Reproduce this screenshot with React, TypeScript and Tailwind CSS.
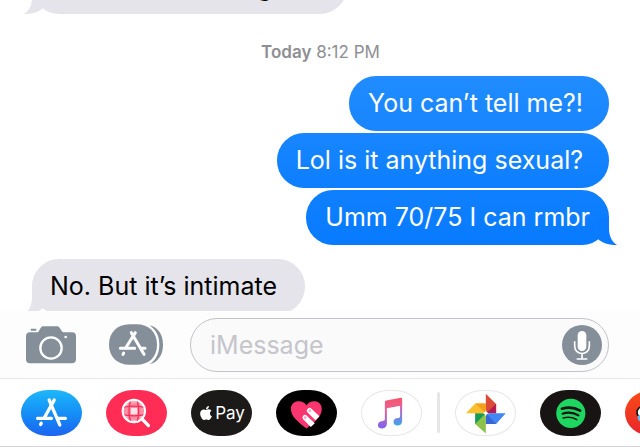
import type { ReactNode } from "react";
import { FaApple } from "react-icons/fa";

const fontStack = "font-['Inter','Liberation_Sans',sans-serif]";

function SentTail() {
  return (
    <svg className="absolute bottom-0 -right-2 h-7 w-[26px]" viewBox="0 0 26 28" aria-hidden="true">
      <path d="M10 0H18V12C18 19 21 25 26 28C18 28 12 26 8 23L4 18Z" fill="#0a7bff" />
    </svg>
  );
}

function ReceivedTail() {
  return (
    <svg className="absolute bottom-0 -left-2 h-7 w-[26px]" viewBox="0 0 26 28" aria-hidden="true">
      <path d="M16 0H8V12C8 19 5 25 0 28C8 28 14 26 18 23L22 18Z" fill="#e5e4ea" />
    </svg>
  );
}

function Bubble({ className, tail, children }: { className: string; tail?: ReactNode; children: ReactNode }) {
  return (
    <div className={`relative flex h-[55px] items-center rounded-[27px] text-[25px] whitespace-nowrap ${className}`}>
      {tail}
      <p className="relative">{children}</p>
    </div>
  );
}

function AppStoreMark() {
  return (
    <g fill="none" stroke="#fff" strokeLinecap="round" strokeLinejoin="round">
      <path d="M117 58L149 133" strokeWidth="10" />
      <path d="M132 58L102 112" strokeWidth="10" />
      <path d="M82 113H124M144 113H166" strokeWidth="10" />
      <path d="M93 128L91 132" strokeWidth="10" />
    </g>
  );
}

function AppPill({ label, className, children }: { label: string; className: string; children: ReactNode }) {
  return (
    <button
      type="button"
      aria-label={label}
      className={`flex h-[46px] w-[61px] shrink-0 items-center justify-center overflow-hidden rounded-[27px/23px] ${className}`}
    >
      {children}
    </button>
  );
}

function CameraIcon() {
  return (
    <svg className="h-[39px] w-[50px]" viewBox="0 0 150 117" aria-hidden="true">
      <path
        d="M12 22H34C41 22 42 4 51 4H94C103 4 105 22 113 22H138Q150 22 150 34V103Q150 115 138 115H12Q0 115 0 103V34Q0 22 12 22Z"
        fill="#848f99"
      />
      <rect x="14" y="11" width="17" height="6" rx="2" fill="#848f99" />
      <circle cx="75" cy="69" r="32" fill="none" stroke="#fff" strokeWidth="7" />
      <circle cx="119" cy="36" r="4" fill="#fff" />
    </svg>
  );
}

function AppDrawerIcon() {
  return (
    <svg className="h-[41px] w-[54px]" viewBox="0 0 162 123" aria-hidden="true">
      <path d="M122 4C148 11 162 32 162 62S148 113 122 121C142 106 151 87 151 62S142 19 122 4Z" fill="#848f99" />
      <path
        d="M62 1H82C120 1 144 25 144 62S120 122 82 122H62C24 122 0 98 0 62S24 1 62 1Z"
        fill="#848f99"
      />
      <g fill="none" stroke="#fff" strokeLinecap="round">
        <path d="M67 26L105 91" strokeWidth="9" />
        <path d="M79 26L50 72" strokeWidth="9" />
        <path d="M34 73H77M96 73H108" strokeWidth="9" />
        <path d="M44 87L42 91" strokeWidth="9" />
      </g>
    </svg>
  );
}

function MicIcon() {
  return (
    <svg className="size-10" viewBox="0 0 120 120" aria-hidden="true">
      <circle cx="60" cy="60" r="60" fill="#848f99" />
      <rect x="47" y="18" width="26" height="60" rx="13" fill="#fff" />
      <path d="M38 49V63C38 93 82 93 82 63V49M60 86V101M44 102H76" fill="none" stroke="#fff" strokeWidth="5" />
    </svg>
  );
}

export default function App() {
  return (
    <div className={`flex h-screen flex-col overflow-hidden bg-white ${fontStack}`}>
      <main className="flex min-h-0 flex-1 flex-col overflow-hidden pr-[31px] pl-8">
        <Bubble className="-mt-[41px] mr-auto w-[315px] shrink-0 justify-end bg-[#e5e4ea] pt-[2px] pr-[75px] text-black" tail={<ReceivedTail />}>
          g
        </Bubble>

        <p className="mt-7 text-center text-[17px] leading-5 text-[#8e8e93]">
          <span className="font-semibold">Today</span> 8:12 PM
        </p>

        <div className="mt-[14px] flex shrink-0 flex-col items-end gap-[2px] text-white">
          <Bubble className="bg-linear-to-b from-[#208cff] to-[#1885ff] pr-[26px] pl-[19px]">You can’t tell me?!</Bubble>
          <Bubble className="bg-linear-to-b from-[#1886ff] to-[#0c7eff] pr-[26px] pl-[19px]">Lol is it anything sexual?</Bubble>
          <Bubble className="bg-linear-to-b from-[#0f80ff] to-[#087aff] px-[19px]" tail={<SentTail />}>
            Umm 70/75 I can rmbr
          </Bubble>
        </div>

        <Bubble className="mt-[14px] mr-auto shrink-0 bg-[#e5e4ea] pr-7 pl-[18px] text-black" tail={<ReceivedTail />}>
          No. But it’s intimate
        </Bubble>
      </main>

      <form className="flex h-[67px] shrink-0 items-center bg-[#fdfdfe] pr-[31px] pl-[26px]" onSubmit={(e) => e.preventDefault()}>
        <button type="button" aria-label="Camera" className="shrink-0">
          <CameraIcon />
        </button>
        <button type="button" aria-label="Apps" className="ml-[33px] shrink-0">
          <AppDrawerIcon />
        </button>
        <div className="ml-[27px] flex h-[54px] min-w-0 flex-1 items-center rounded-[27px] border border-[#c3c3c9] bg-[#fafafb] pr-[6px] pl-[19px]">
          <input
            type="text"
            aria-label="Message"
            placeholder="iMessage"
            className="min-w-0 flex-1 bg-transparent pt-[3px] text-[25px] text-black outline-none placeholder:text-[#c5c5ca]"
          />
          <button type="button" aria-label="Record audio" className="shrink-0">
            <MicIcon />
          </button>
        </div>
      </form>

      <nav aria-label="iMessage apps" className="flex h-[69px] shrink-0 items-center gap-6 overflow-hidden border-t border-b border-t-[#e6e6e9] border-b-[#d6d6d8] bg-white pl-[21px]">
        <AppPill label="App Store" className="bg-linear-to-b from-[#1fb7fa] to-[#1d63f0]">
          <svg className="h-[46px] w-[61px]" viewBox="32 28 184 138" aria-hidden="true">
            <AppStoreMark />
          </svg>
        </AppPill>
        <AppPill label="Images" className="bg-[#ff2d55]">
          <svg className="h-[46px] w-[61px]" viewBox="287 28 184 138" aria-hidden="true">
            <circle cx="371" cy="91" r="34" fill="#fbb4c2" />
            <path d="M353 65H390V118H353ZM340 80H402V101H340Z" fill="#ff8fa5" />
            <path d="M362 82H381V101H362Z" fill="#ffe3e8" />
            <path d="M361 58Q352 91 361 124M381 58Q390 91 381 124M338 80Q371 73 404 80M338 102Q371 109 404 102" fill="none" stroke="#ff2d55" strokeWidth="4" />
            <circle cx="371" cy="91" r="34" fill="none" stroke="#fff" strokeWidth="6" />
            <path d="M397 116L415 135" stroke="#fff" strokeWidth="10" strokeLinecap="round" />
          </svg>
        </AppPill>
        <AppPill label="Apple Pay" className="gap-px bg-[#1b1a19] text-white">
          <FaApple className="size-4" />
          <span className="text-[17px] leading-5">Pay</span>
        </AppPill>
        <AppPill label="Digital Touch" className="bg-black">
          <svg className="h-[46px] w-[61px]" viewBox="317 28 184 138" aria-hidden="true">
            <path d="M409 144C385 125 362 108 362 85C362 58 396 54 409 74C422 54 455 58 455 85C455 108 432 126 409 144Z" fill="#fb3570" />
            <path d="M413 84A8 8 0 0 1 424 84L448 107L436 119L413 96A8 8 0 0 1 413 84Z" fill="#fff" />
            <path d="M399 105A8 8 0 0 1 410 105L434 128L422 139L399 116A8 8 0 0 1 399 105Z" fill="#fff" />
            <circle cx="419" cy="90" r="4" fill="#fda8c2" />
            <circle cx="405" cy="111" r="4" fill="#fda8c2" />
          </svg>
        </AppPill>
        <AppPill label="Music" className="border border-[#e6e6e8] bg-white">
          <svg className="h-[46px] w-[61px] shrink-0" viewBox="60 28 184 138" aria-hidden="true">
            <defs>
              <linearGradient id="noteLeft" x1="0" y1="52" x2="0" y2="144" gradientUnits="userSpaceOnUse">
                <stop offset="0" stopColor="#f7566f" />
                <stop offset="0.35" stopColor="#ea6190" />
                <stop offset="1" stopColor="#7b62f5" />
              </linearGradient>
              <linearGradient id="noteRight" x1="0" y1="52" x2="0" y2="136" gradientUnits="userSpaceOnUse">
                <stop offset="0" stopColor="#f7566f" />
                <stop offset="0.4" stopColor="#c45fc0" />
                <stop offset="1" stopColor="#35a9f3" />
              </linearGradient>
            </defs>
            <path d="M178 60H184V121C184 130 178 135 170 135C163 135 158 130 158 124C158 116 164 112 171 112C176 112 178 110 178 105Z" fill="url(#noteRight)" />
            <path d="M132 64Q132 60 136 59L180 51Q184 50 184 54V74L138 83V129C138 138 132 144 123 144C115 144 111 139 111 134C111 126 117 122 124 121C130 120 132 119 132 114Z" fill="url(#noteLeft)" />
          </svg>
        </AppPill>

        <span className="-mx-[9px] h-[41px] w-[3px] shrink-0 rounded-full bg-[#e5e5ea]" />

        <AppPill label="Photos" className="border border-[#e6e6e8] bg-white">
          <svg className="h-[46px] w-[61px] shrink-0" viewBox="343 28 184 138" aria-hidden="true">
            <path d="M436 39L467 70V98H436Z" fill="#dc4a38" />
            <path d="M467 70V98H436Z" fill="#b31d52" />
            <path d="M436 98H496L467 130H436Z" fill="#4285f4" />
            <path d="M436 98L467 130H436Z" fill="#3567d6" />
            <path d="M436 98V159L404 130V98Z" fill="#8bc34a" />
            <path d="M436 98H404V130Z" fill="#159b58" />
            <path d="M376 98L404 68H436V98Z" fill="#fbc02d" />
            <path d="M404 68H436V98Z" fill="#f4a01c" />
            <path d="M436 89L439 95L445 98L439 101L436 107L433 101L427 98L433 95Z" fill="#fff" />
          </svg>
        </AppPill>
        <AppPill label="Spotify" className="bg-[#191414]">
          <svg className="h-[46px] w-[61px]" viewBox="118 28 184 138" aria-hidden="true">
            <circle cx="211" cy="98" r="44" fill="#1ed760" />
            <g fill="none" stroke="#191414" strokeLinecap="round">
              <path d="M184 84Q214 75 239 90" strokeWidth="8" />
              <path d="M186 99Q212 91 234 104" strokeWidth="6.5" />
              <path d="M188 112Q210 106 229 117" strokeWidth="5" />
            </g>
          </svg>
        </AppPill>
        <AppPill label="Stickers" className="bg-linear-to-b from-[#f84a12] to-[#e8222b]">
          <svg className="h-[46px] w-[61px]" viewBox="373 28 184 138" aria-hidden="true">
            <circle cx="426" cy="95" r="17" fill="#fff" stroke="#111" strokeWidth="5" />
            <path d="M411 106Q419 101 428 108V122Q410 126 411 106Z" fill="#63bdf5" />
          </svg>
        </AppPill>
      </nav>
    </div>
  );
}
